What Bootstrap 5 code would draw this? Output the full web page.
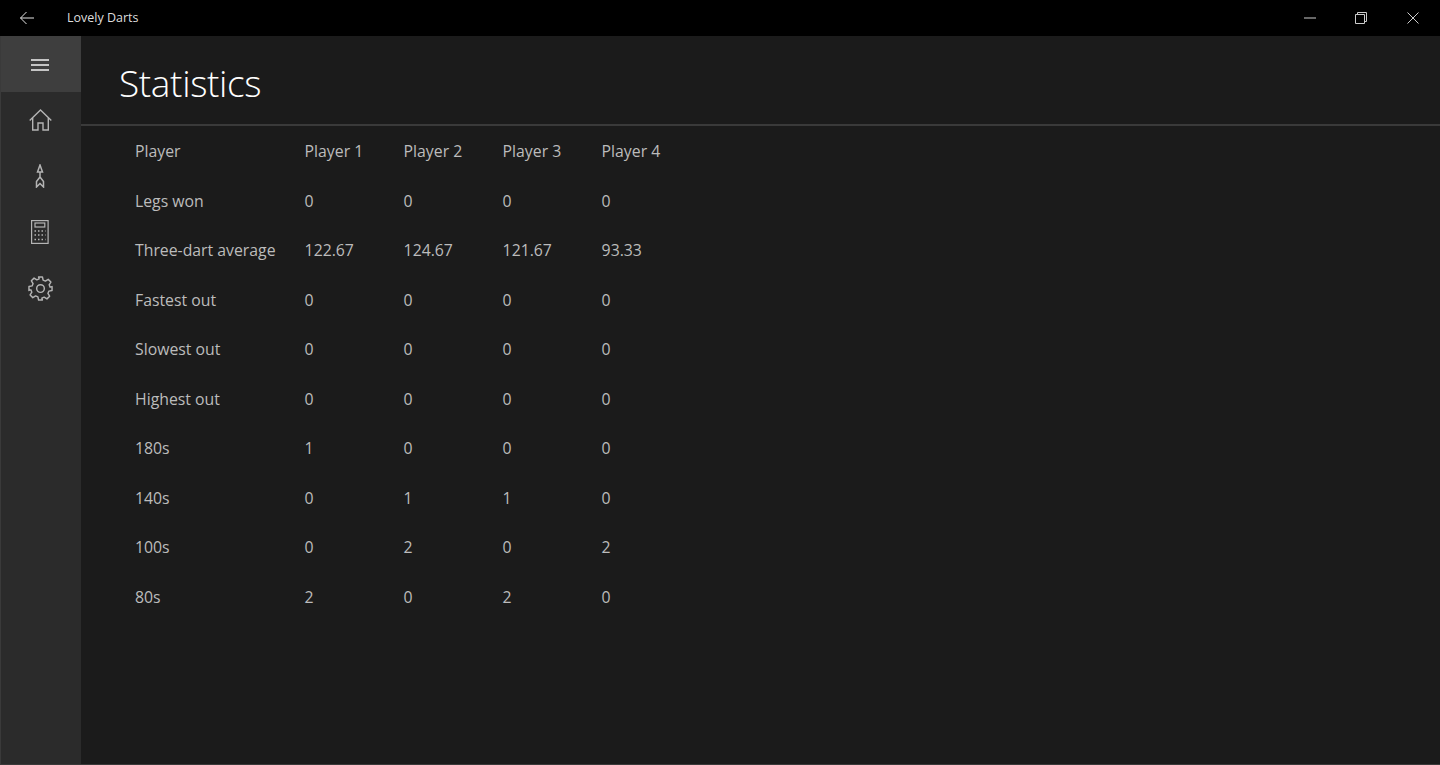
<!DOCTYPE html>
<html lang="en">
<head>
    <meta charset="UTF-8">
    <title>Lovely Darts</title>
    <link href="https://cdn.jsdelivr.net/npm/bootstrap@5.3.0/dist/css/bootstrap.min.css" rel="stylesheet">
    <style>
        html, body { height: 100%; }
        body { background: #1b1b1b; font-family: "Open Sans", "Noto Sans", sans-serif; overflow: hidden; }
        .app-window { height: 765px; border-left: 1px solid #3a3a3a; border-bottom: 1px solid #3a3a3a; }
        .title-bar { height: 36px; background: #000; color: #dedede; font-size: 12.5px; margin-left: -1px; padding-right: 1px; }
        .back-btn { width: 54px; }
        .app-name { margin-left: 13px; padding-top: 1px; }
        .win-btn { width: 51.7px; height: 36px; }
        .side-pane { width: 80px; background: #2b2b2b; }
        .pane-item { height: 56px; padding-right: 2px; }
        .pane-item.menu-item { background: #3e3e3e; padding-top: 1px; }
        .page-head { height: 90px; border-bottom: 2px solid #3a3a3a; padding-left: 38px; }
        .page-head h1 { font-size: 37px; font-weight: 300; color: #fff; margin: 0; line-height: 94px; letter-spacing: -0.35px; }
        .stats-table { width: auto; margin: 0 0 0 54px; --bs-table-bg: transparent; --bs-table-color: #bcbcbc; font-size: 15.8px; }
        .stats-table td { padding: 0; height: 49.55px; vertical-align: middle; width: 99px; }
        .stats-table td:first-child { width: 169.6px; }
        .stats-table tbody tr:first-child td { height: 50.6px; padding-top: 1px; }
    </style>
</head>
<body>

<div class="app-window d-flex flex-column">
    <!-- Title bar -->
    <div class="title-bar d-flex align-items-center">
        <div class="back-btn d-flex justify-content-center">
            <svg width="16" height="14" viewBox="0 0 16 14" fill="none" stroke="#e6e6e6" stroke-width="1"><path d="M15 7H1.500M7.500 1L1.500 7l6 6"/></svg>
        </div>
        <span class="app-name flex-grow-1">Lovely Darts</span>
        <div class="win-btn d-flex align-items-center justify-content-center">
            <svg width="12" height="2" viewBox="0 0 12 2" stroke="#ccc"><path d="M0 1h12"/></svg>
        </div>
        <div class="win-btn d-flex align-items-center justify-content-center">
            <svg width="12" height="12" viewBox="0 0 12 12" fill="none" stroke="#ccc"><path d="M.5 2.500h9v9h-9zM2.500 2.500V.5h9v9h-2"/></svg>
        </div>
        <div class="win-btn d-flex align-items-center justify-content-center">
            <svg width="12" height="12" viewBox="0 0 12 12" fill="none" stroke="#ccc"><path d="M.5.5l11 11M11.500.5l-11 11"/></svg>
        </div>
    </div>

    <div class="d-flex flex-grow-1">
        <!-- Side pane -->
        <div class="side-pane flex-shrink-0">
            <div class="pane-item menu-item d-flex align-items-center justify-content-center">
                <svg width="18" height="12" viewBox="0 0 18 12" stroke="#f2f2f2" stroke-width="1.300"><path d="M0 1h18M0 6h18M0 11h18"/></svg>
            </div>
            <div class="pane-item d-flex align-items-center justify-content-center">
                <svg width="23" height="22" viewBox="0 0 23 22" fill="none" stroke="#b4b4b4" stroke-width="1.400"><path d="M.7 11.500L11.500 1l10.800 10.500M3.700 8.500V21h5.300v-7h5v7h5.300V8.500"/></svg>
            </div>
            <div class="pane-item d-flex align-items-center justify-content-center">
                <svg width="10" height="24" viewBox="0 0 10 24" fill="none" stroke="#b4b4b4" stroke-width="1.500"><path d="M5 1L2.500 8h5zM5 8v5M5 13L1.500 17.500V23L5 19.500 8.500 23v-5.500z"/></svg>
            </div>
            <div class="pane-item d-flex align-items-center justify-content-center">
                <svg width="18" height="24" viewBox="0 0 18 24" fill="none" stroke="#b4b4b4" stroke-width="1.200"><rect x=".6" y=".6" width="16.500" height="22.800"/><rect x="4" y="3" width="9.800" height="4"/><path stroke-width="1.500" stroke-dasharray="1.500 2" d="M3.500 11h11M3.500 15h11M3.500 19.500h11"/></svg>
            </div>
            <div class="pane-item d-flex align-items-center justify-content-center">
                <svg width="25" height="25" viewBox="0 0 26 26" fill="none" stroke="#b4b4b4" stroke-width="1.500" stroke-linejoin="round"><circle cx="13" cy="13" r="4"/><path d="M11 1h4l.7 3.300 2.400 1 2.900-1.800 2.800 2.800-1.800 2.900 1 2.400L25 11v4l-3.300.7-1 2.400 1.800 2.900-2.800 2.800-2.900-1.800-2.400 1L15 25h-4l-.7-3.300-2.400-1L5 22.500 2.200 19.700 4 16.800l-1-2.400L1 15v-4l3.300-.7 1-2.400L3.500 5 6.300 2.200l2.900 1.800 2.400-1z"/></svg>
            </div>
        </div>

        <!-- Page content -->
        <div class="flex-grow-1">
            <div class="page-head">
                <h1>Statistics</h1>
            </div>
            <table class="table table-borderless stats-table" id="statsTable"><tbody></tbody></table>
        </div>
    </div>
</div>

<script src="https://cdn.jsdelivr.net/npm/bootstrap@5.3.0/dist/js/bootstrap.bundle.min.js"></script>
<script>
  const rows = [
    ['Player', 'Player 1', 'Player 2', 'Player 3', 'Player 4'],
    ['Legs won', 0, 0, 0, 0],
    ['Three-dart average', '122.67', '124.67', '121.67', '93.33'],
    ['Fastest out', 0, 0, 0, 0],
    ['Slowest out', 0, 0, 0, 0],
    ['Highest out', 0, 0, 0, 0],
    ['180s', 1, 0, 0, 0],
    ['140s', 0, 1, 1, 0],
    ['100s', 0, 2, 0, 2],
    ['80s', 2, 0, 2, 0]
  ];

  const tbody = document.querySelector('#statsTable tbody');
  rows.forEach(row => {
    const tr = document.createElement('tr');
    row.forEach(cell => {
      const td = document.createElement('td');
      td.textContent = cell;
      tr.appendChild(td);
    });
    tbody.appendChild(tr);
  });
</script>

</body>
</html>
